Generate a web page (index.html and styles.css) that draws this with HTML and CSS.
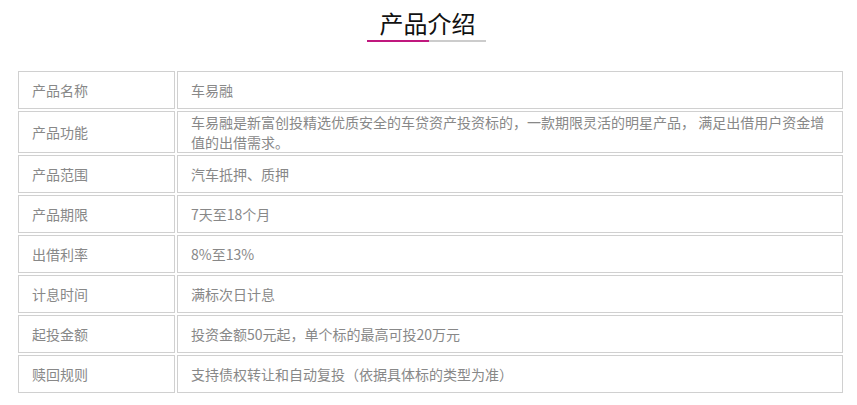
FILE: index.html
```html
<!DOCTYPE html>
<html lang="zh-CN">
<head>
    <meta charset="UTF-8">
    <meta name="viewport" content="width=device-width, initial-scale=1.0">
    <title>产品介绍</title>
    <link rel="stylesheet" href="styles.css">
</head>
<body>

    <div class="title-wrap">
        <h2 class="title">产品介绍</h2>
        <div class="title-line"><span class="line-pink"></span><span class="line-gray"></span></div>
    </div>

    <table class="info">
        <tr>
            <td class="label">产品名称</td>
            <td>车易融</td>
        </tr>
        <tr>
            <td class="label">产品功能</td>
            <td>车易融是新富创投精选优质安全的车贷资产投资标的，一款期限灵活的明星产品， 满足出借用户资金增值的出借需求。</td>
        </tr>
        <tr>
            <td class="label">产品范围</td>
            <td>汽车抵押、质押</td>
        </tr>
        <tr>
            <td class="label">产品期限</td>
            <td>7天至18个月</td>
        </tr>
        <tr>
            <td class="label">出借利率</td>
            <td>8%至13%</td>
        </tr>
        <tr>
            <td class="label">计息时间</td>
            <td>满标次日计息</td>
        </tr>
        <tr>
            <td class="label">起投金额</td>
            <td>投资金额50元起，单个标的最高可投20万元</td>
        </tr>
        <tr>
            <td class="label">赎回规则</td>
            <td>支持债权转让和自动复投（依据具体标的类型为准）</td>
        </tr>
    </table>

</body>
</html>
```

FILE: styles.css
```css
body {
    font-family: "Microsoft YaHei", "Noto Sans CJK SC", sans-serif;
    background-color: #fff;
    margin: 0;
    padding: 0;
    color: #888;
}

.title-wrap {
    width: 119px;
    margin: 0 auto;
    padding-top: 8px;
    position: relative;
    left: -2px;
}

.title {
    margin: 0;
    font-size: 24px;
    font-weight: normal;
    color: #111;
    text-align: center;
    line-height: 30px;
    padding-left: 2px;
}

.title-line {
    display: flex;
    height: 2px;
    margin-top: 2px;
}

.line-pink {
    width: 62px;
    background-color: #c0187e;
}

.line-gray {
    flex: 1;
    background-color: #ccc;
}

.info {
    margin: 27px 0 0 16px;
    width: 829px;
    border-collapse: separate;
    border-spacing: 2px;
    font-size: 14px;
}

.info td {
    border: 1px solid #d0d0d0;
    height: 36px;
    padding: 0 13px;
    line-height: 20px;
    vertical-align: middle;
}

.info td.label {
    width: 129px;
}
```
